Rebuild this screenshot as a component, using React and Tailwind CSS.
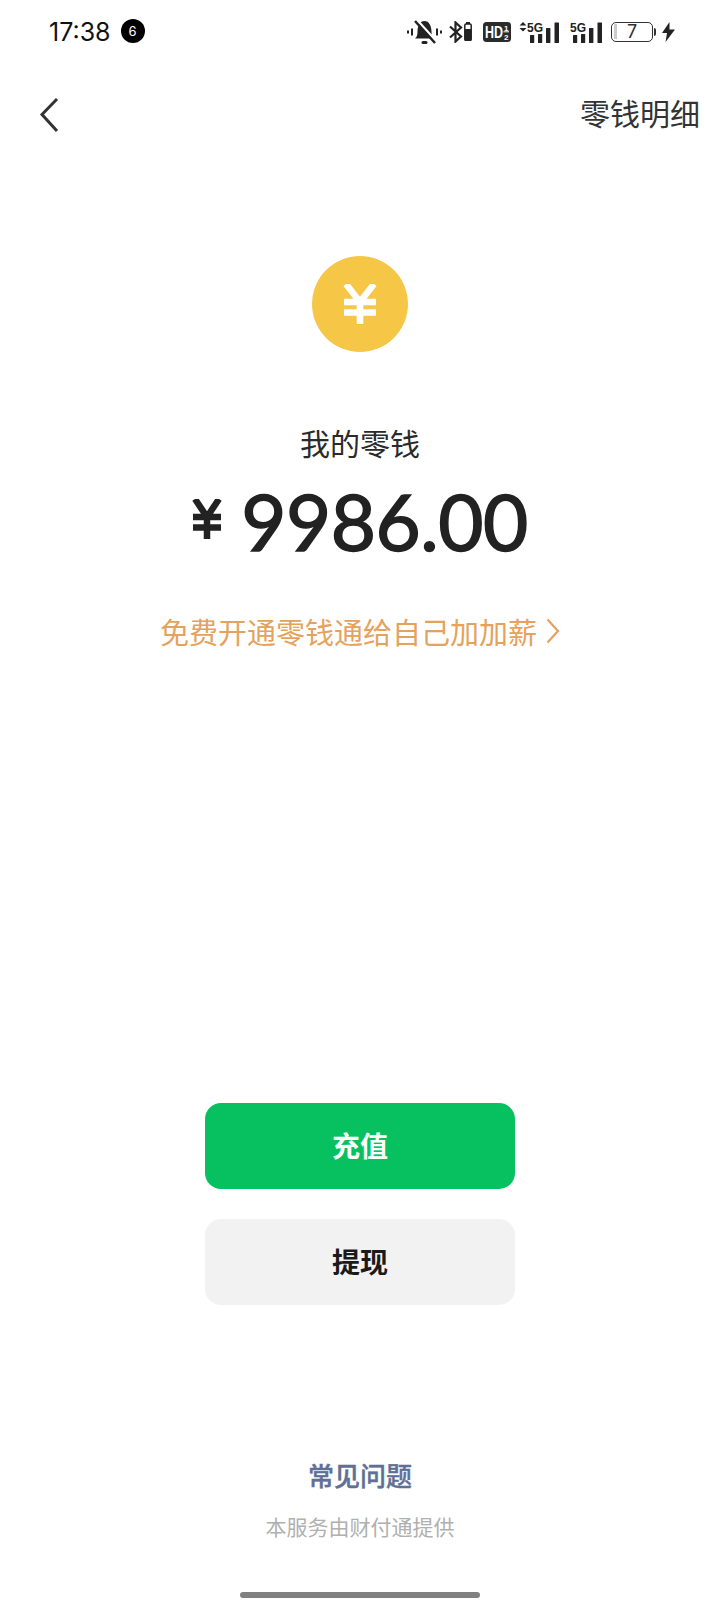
import React from 'react';

const cjk = 'font-["Inter","Noto_Sans_CJK_SC",sans-serif]';

function BellOff() {
  return (
    <svg width="35" height="24" viewBox="0 0 35 24" fill="none">
      <path d="M1 10.500v3M5 8.500v7M30 8.500v7M34 10.500v3" stroke="#222" strokeWidth="2" />
      <path d="M8 18.500c2-1.500 2.500-4 2.500-7C10.500 6 13 1 17.500 1s7 5 7 10.500c0 3 .5 5.500 2.500 7z" fill="#222" />
      <rect x="14.500" y="21" width="6" height="3" rx="1.500" fill="#222" />
      <path d="M10 0l20 22" stroke="#fff" strokeWidth="2.500" />
      <path d="M8 1l20 22" stroke="#222" strokeWidth="2.500" />
    </svg>
  );
}

function Bluetooth() {
  return (
    <svg width="14" height="22" viewBox="0 0 14 22" fill="none">
      <path d="M1 5.500L12 15.500l-5.500 5V1.500L12 6.500 1 16.500" stroke="#222" strokeWidth="2.200" />
    </svg>
  );
}

function TinyBattery() {
  return (
    <svg width="8" height="19" viewBox="0 0 8 19">
      <rect x="2" y="0" width="4" height="2" fill="#222" />
      <rect x="0.800" y="2" width="6.400" height="16.500" rx="1.200" fill="none" stroke="#222" strokeWidth="1.500" />
      <rect x="0.800" y="7" width="6.400" height="11.500" rx="1" fill="#222" />
    </svg>
  );
}

function HdBadge() {
  return (
    <svg width="28" height="20" viewBox="0 0 28 20">
      <rect width="28" height="20" rx="3.500" fill="#2b2b2b" />
      <text x="2" y="12.600" transform="scale(1 1.250)" fontFamily="Liberation Sans" fontWeight="700" fontSize="12.500" fill="#fff">HD</text>
      <text x="21" y="8.500" fontFamily="Liberation Sans" fontWeight="700" fontSize="8" fill="#fff">1</text>
      <rect x="20.500" y="9.300" width="5.500" height="1" fill="#fff" />
      <text x="21" y="18.300" fontFamily="Liberation Sans" fontWeight="700" fontSize="8" fill="#fff">2</text>
    </svg>
  );
}

function Signal({ arrows }) {
  return (
    <svg width={arrows ? 40 : 33} height="22" viewBox={arrows ? '0 0 40 22' : '7 0 33 22'}>
      {arrows && <path d="M4 1l3.500 3.500H.5zM4 10.500L7.500 7H.5z" fill="#222" />}
      <text x="8" y="10.500" fontFamily="Liberation Sans" fontWeight="700" fontSize="13" textLength="16" lengthAdjust="spacingAndGlyphs" fill="#222">5G</text>
      <rect x="11" y="14" width="4.200" height="8" rx="0.500" fill="#222" />
      <rect x="19" y="13" width="4.200" height="9" rx="0.500" fill="#222" />
      <rect x="27" y="7" width="4.400" height="15" rx="0.500" fill="#222" />
      <rect x="35.500" y="1.500" width="4.500" height="20.500" rx="0.500" fill="#222" />
    </svg>
  );
}

function Battery() {
  return (
    <div className="flex items-center">
      <div className="relative w-[42px] h-[20px] rounded-[5px] border-[1.500px] border-[#333] flex items-center justify-center text-[18px] leading-none text-[#333] font-['Inter',sans-serif]">
        <div className="absolute left-[1.500px] top-[1.500px] bottom-[1.500px] w-[3px] bg-[#ccc]"></div>
        7
      </div>
      <div className="w-[2px] h-[8px] ml-[1px] bg-[#333] rounded-r-sm"></div>
    </div>
  );
}

function Bolt() {
  return (
    <svg width="13" height="20" viewBox="0 0 13 20">
      <path d="M7.500 0L0 11h5L3.500 20 13 7.500H7.500z" fill="#222" />
    </svg>
  );
}

function StatusBar() {
  return (
    <div className="h-[64px] flex items-center pl-[49px] pr-[45px]">
      <span className="text-[25px] leading-none text-[#111] mt-[1px] font-['Inter',sans-serif]">17:38</span>
      <span className="ml-[10px] w-[24px] h-[24px] rounded-full bg-black text-white text-[13px] leading-none flex items-center justify-center font-['Inter',sans-serif] mb-[2px]">6</span>
      <div className="ml-auto flex items-center mb-[1px]">
        <BellOff />
        <div className="ml-[7px]"><Bluetooth /></div>
        <div className="ml-[1px]"><TinyBattery /></div>
        <div className="ml-[11px]"><HdBadge /></div>
        <div className="ml-[8px]"><Signal arrows /></div>
        <div className="ml-[10px]"><Signal /></div>
        <div className="ml-[9px]"><Battery /></div>
        <div className="ml-[6px]"><Bolt /></div>
      </div>
    </div>
  );
}

export default function App() {
  return (
    <div className={`w-[720px] h-[1612px] bg-white flex flex-col items-center ${cjk}`}>
      <div className="w-full"><StatusBar /></div>

      <div className="w-full h-[102px] flex items-center justify-between pl-[38px] pr-[20px]">
        <svg width="24" height="38" viewBox="0 0 24 38" fill="none">
          <path d="M19 3L4 18.500 19 35" stroke="#333" strokeWidth="3" />
        </svg>
        <span className="text-[30px] leading-none text-[#333] mb-[6px] font-['Noto_Sans_CJK_SC',sans-serif]">零钱明细</span>
      </div>

      <div className="mt-[90px] w-[96px] h-[96px] rounded-full bg-[#f6c747] flex items-center justify-center">
        <svg width="34" height="40" viewBox="0 0 34 40" fill="none">
          <path d="M3 0l14 18L31 0M17 17v23M1 18h32M1 28.500h32" stroke="#fff" strokeWidth="6.500" />
        </svg>
      </div>

      <div className="mt-[70px] text-[30px] leading-[40px] text-[#2a2a2a] font-['Noto_Sans_CJK_SC',sans-serif]">我的零钱</div>

      <div className="mt-[14px] flex items-center h-[90px]">
        <svg width="30" height="40" viewBox="0 0 30 40" fill="none" className="mr-[19px] mt-[-4px]">
          <path d="M3 0l12 18L27 0M15 17v23M1 18h28M1 28.500h28" stroke="#222" strokeWidth="6.500" />
        </svg>
        <span className="text-[78px] leading-none tracking-[-0.5px] text-[#222] [-webkit-text-stroke:1.5px_#222] font-['Lato',sans-serif]">9986.00</span>
      </div>

      <div className="mt-[45px] flex items-center text-[29px] leading-[40px] text-[#e5a25c] font-['Noto_Sans_CJK_SC',sans-serif]">
        免费开通零钱通给自己加加薪
        <svg width="14" height="26" viewBox="0 0 14 26" fill="none" className="ml-[9px]">
          <path d="M1.500 1.500L12 13 1.500 24.500" stroke="#e5a25c" strokeWidth="2.200" />
        </svg>
      </div>

      <button className="mt-[452px] w-[310px] h-[86px] pb-[2px] rounded-[16px] bg-[#07c160] text-white text-[28px] font-bold font-['Noto_Sans_CJK_SC',sans-serif]">充值</button>
      <button className="mt-[30px] w-[310px] h-[86px] pb-[2px] rounded-[16px] bg-[#f2f2f2] text-[#1a1a1a] text-[28px] font-bold font-['Noto_Sans_CJK_SC',sans-serif]">提现</button>

      <div className="mt-[152px] text-[26px] leading-[36px] font-medium text-[#5f6f96] [-webkit-text-stroke:0.4px_#5f6f96] font-['Noto_Sans_CJK_SC',sans-serif]">常见问题</div>
      <div className="mt-[18px] text-[21px] leading-[30px] text-[#b0b0b0] font-['Noto_Sans_CJK_SC',sans-serif]">本服务由财付通提供</div>
      <div className="mt-[51px] w-[240px] h-[6px] rounded-full bg-[#808080]"></div>
    </div>
  );
}
